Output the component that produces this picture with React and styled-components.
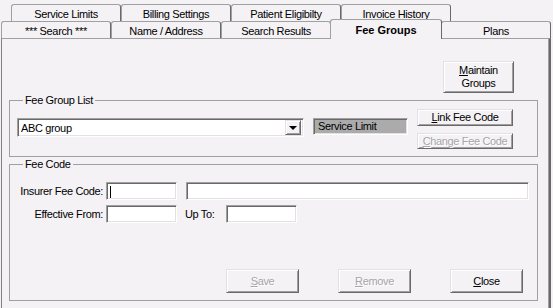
import React from 'react'
import styled, { createGlobalStyle, css } from 'styled-components'

const GlobalStyle = createGlobalStyle`
  html, body {
    margin: 0;
    padding: 0;
    background: #f5f2f5;
  }
  body {
    font-family: "Liberation Sans", Arial, sans-serif;
    font-size: 11px;
    letter-spacing: -0.35px;
    color: #000;
  }
`

const Window = styled.div`
  width: 553px;
  height: 308px;
  box-sizing: border-box;
  padding-top: 4px;
  overflow: hidden;
  background: #f5f2f5;
`

const TabRow = styled.div`
  display: flex;
  align-items: flex-end;
  height: 17px;
  padding-left: ${p => p.$indent}px;
`

const Tab = styled.div`
  position: relative;
  width: 110px;
  height: 17px;
  box-sizing: border-box;
  display: flex;
  align-items: center;
  justify-content: center;
  padding-top: 1px;
  background: #f5f2f5;
  border: 1px solid #a0a0a0;
  border-right-color: #696969;
  border-bottom: none;
  border-radius: 3px 3px 0 0;
  white-space: nowrap;

  ${p => p.$active && css`
    z-index: 1;
    width: 112px;
    height: 20px;
    margin: 0 -1px -1px;
    font-weight: bold;
    letter-spacing: 0;
    padding-top: 0;
  `}
`

const Panel = styled.div`
  margin-left: 1px;
  width: 550px;
  height: 270px;
  box-sizing: border-box;
  padding: 0 11px 0 7px;
  border-top: 1px solid #a0a0a0;
  border-left: 1px solid #808080;
  border-right: 2px solid #696969;
  box-shadow: inset -1px 0 #a0a0a0;
`

const ToolRow = styled.div`
  display: flex;
  justify-content: flex-end;
  padding: 22px 24px 0 0;
`

const Button = styled.button`
  font: inherit;
  letter-spacing: inherit;
  width: ${p => p.$w}px;
  height: ${p => p.$h}px;
  padding: 0;
  line-height: 13px;
  color: #000;
  background: #f5f2f5;
  border: 1px solid;
  border-color: #e4e0e4 #696969 #696969 #e4e0e4;
  box-shadow: inset 1px 1px #fff, inset -1px -1px #a0a0a0;

  &:disabled {
    color: #a8a4a8;
    text-shadow: 1px 1px #fff;
  }

  u {
    text-decoration: underline;
  }
`

const GroupBox = styled.fieldset`
  margin: 1px 0 0;
  height: ${p => p.$h}px;
  box-sizing: border-box;
  padding: 0 0 0 7px;
  border: 1px solid #a0a0a0;
  min-inline-size: 0;
`

const Caption = styled.legend`
  margin-left: 6px;
  padding: 0 2px;
  line-height: 13px;
`

const ListRow = styled.div`
  display: flex;
  align-items: flex-start;
  padding-top: 2px;
`

const Sunken = css`
  box-sizing: border-box;
  border: 1px solid;
  border-color: #a0a0a0 #fff #fff #a0a0a0;
  box-shadow: inset 1px 1px #696969, inset -1px -1px #e4e0e4;
`

const Combo = styled.div`
  ${Sunken}
  display: flex;
  align-items: center;
  width: 287px;
  height: 19px;
  margin-top: 9px;
  padding: 2px 2px 2px 3px;
  background: #fff;
`

const ComboText = styled.span`
  flex: 1;
`

const DropButton = styled.div`
  width: 16px;
  height: 15px;
  box-sizing: border-box;
  display: flex;
  align-items: center;
  justify-content: center;
  background: #f5f2f5;
  border: 1px solid;
  border-color: #e4e0e4 #696969 #696969 #e4e0e4;
  box-shadow: inset 1px 1px #fff, inset -1px -1px #a0a0a0;
`

const Arrow = styled.span`
  width: 0;
  height: 0;
  border-left: 4px solid transparent;
  border-right: 4px solid transparent;
  border-top: 4px solid #000;
  margin-top: 1px;
`

const StatusBox = styled.div`
  ${Sunken}
  width: 95px;
  height: 17px;
  margin: 9px 0 0 9px;
  padding: 1px 0 0 4px;
  background: #ababab;
`

const ButtonStack = styled.div`
  display: flex;
  flex-direction: column;
  gap: 7px;
  margin-left: 9px;
`

const FormRow = styled.div`
  display: flex;
  align-items: center;
  margin-top: ${p => p.$top}px;
`

const Label = styled.span`
  width: ${p => p.$w}px;
  text-align: ${p => p.$align || 'right'};
  margin-left: ${p => p.$left || 0}px;
  margin-right: ${p => p.$gap}px;
  white-space: nowrap;
`

const Field = styled.div`
  ${Sunken}
  width: ${p => p.$w}px;
  height: 18px;
  margin-left: ${p => p.$left || 0}px;
  padding: 3px 0 0 3px;
  background: #fff;
`

const Caret = styled.span`
  display: block;
  width: 1px;
  height: 12px;
  background: #000;
`

const ActionRow = styled.div`
  display: flex;
  justify-content: flex-end;
  gap: 39px;
  margin-top: 46px;
  padding-right: 14px;
`

const topTabs = ['Service Limits', 'Billing Settings', 'Patient Eligibilty', 'Invoice History']
const frontTabs = ['*** Search ***', 'Name / Address', 'Search Results', 'Fee Groups', 'Plans']

export default function App() {
  return (
    <>
      <GlobalStyle />
      <Window>
        <TabRow $indent={11}>
          {topTabs.map(t => <Tab key={t}>{t}</Tab>)}
        </TabRow>
        <TabRow $indent={1}>
          {frontTabs.map(t => <Tab key={t} $active={t === 'Fee Groups'}>{t}</Tab>)}
        </TabRow>
        <Panel>
          <ToolRow>
            <Button $w={71} $h={32}><u>M</u>aintain<br />Groups</Button>
          </ToolRow>
          <GroupBox $h={63}>
            <Caption>Fee Group List</Caption>
            <ListRow>
              <Combo>
                <ComboText>ABC group</ComboText>
                <DropButton><Arrow /></DropButton>
              </Combo>
              <StatusBox>Service Limit</StatusBox>
              <ButtonStack>
                <Button $w={96} $h={17}><u>L</u>ink Fee Code</Button>
                <Button $w={96} $h={16} disabled><u>C</u>hange Fee Code</Button>
              </ButtonStack>
            </ListRow>
          </GroupBox>
          <GroupBox $h={143}>
            <Caption>Fee Code</Caption>
            <FormRow $top={11}>
              <Label $w={86} $gap={3}>Insurer Fee Code:</Label>
              <Field $w={71}><Caret /></Field>
              <Field $w={343} $left={9} />
            </FormRow>
            <FormRow $top={5}>
              <Label $w={86} $gap={3}>Effective From:</Label>
              <Field $w={71} />
              <Label $w={33} $align="left" $left={8} $gap={8}>Up To:</Label>
              <Field $w={71} />
            </FormRow>
            <ActionRow>
              <Button $w={73} $h={24} disabled><u>S</u>ave</Button>
              <Button $w={73} $h={24} disabled><u>R</u>emove</Button>
              <Button $w={73} $h={24}><u>C</u>lose</Button>
            </ActionRow>
          </GroupBox>
        </Panel>
      </Window>
    </>
  )
}
